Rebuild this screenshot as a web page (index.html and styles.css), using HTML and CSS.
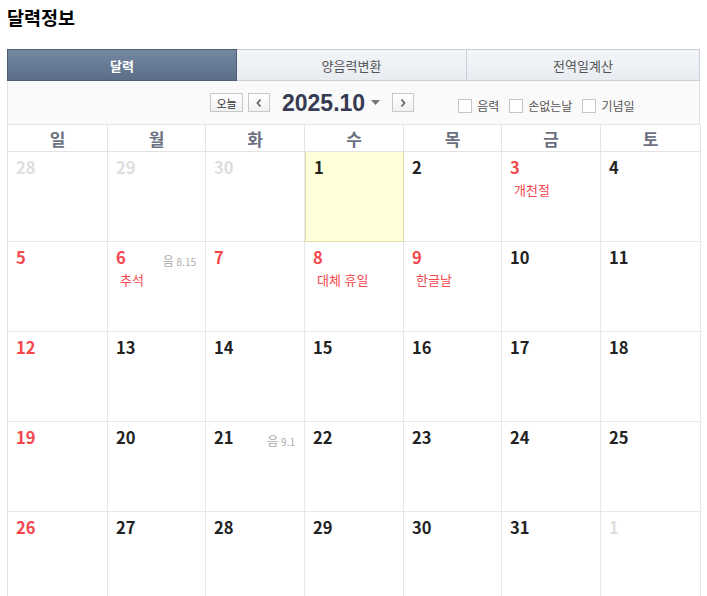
FILE: index.html
```html
<!DOCTYPE html>
<html lang="ko">
<head>
<meta charset="utf-8">
<link rel="stylesheet" href="styles.css">
</head>
<body>
<h2 class="title">달력정보</h2>
<div class="cal">
  <div class="tabs">
    <div class="tab active">달력</div>
    <div class="tab">양음력변환</div>
    <div class="tab">전역일계산</div>
  </div>
  <div class="toolbar">
    <div class="nav">
      <span class="btn today">오늘</span>
      <span class="btn arrow"><svg width="8" height="10" viewBox="0 0 8 10"><path d="M5.5 1.5 L2.5 5 L5.5 8.5" fill="none" stroke="#666" stroke-width="1.8"/></svg></span>
      <span class="month">2025.10</span>
      <svg class="caret" width="9" height="6" viewBox="0 0 9 6"><path d="M0 0 H9 L4.5 5 Z" fill="#777"/></svg>
      <span class="btn arrow"><svg width="8" height="10" viewBox="0 0 8 10"><path d="M2.5 1.5 L5.5 5 L2.5 8.5" fill="none" stroke="#666" stroke-width="1.8"/></svg></span>
    </div>
    <div class="checks">
      <label class="chk"><span class="box"></span>음력</label>
      <label class="chk"><span class="box"></span>손없는날</label>
      <label class="chk"><span class="box"></span>기념일</label>
    </div>
  </div>
  <div class="grid">
    <div class="dow">일</div><div class="dow">월</div><div class="dow">화</div><div class="dow">수</div><div class="dow">목</div><div class="dow">금</div><div class="dow">토</div>

    <div class="day other"><span class="num">28</span></div>
    <div class="day other"><span class="num">29</span></div>
    <div class="day other"><span class="num">30</span></div>
    <div class="day today-cell"><span class="num">1</span></div>
    <div class="day"><span class="num">2</span></div>
    <div class="day red"><span class="num">3</span><div class="hol">개천절</div></div>
    <div class="day"><span class="num">4</span></div>

    <div class="day red"><span class="num">5</span></div>
    <div class="day red"><span class="num">6</span><span class="lunar"><b>음</b> 8.15</span><div class="hol">추석</div></div>
    <div class="day red"><span class="num">7</span></div>
    <div class="day red"><span class="num">8</span><div class="hol">대체 휴일</div></div>
    <div class="day red"><span class="num">9</span><div class="hol">한글날</div></div>
    <div class="day"><span class="num">10</span></div>
    <div class="day"><span class="num">11</span></div>

    <div class="day red"><span class="num">12</span></div>
    <div class="day"><span class="num">13</span></div>
    <div class="day"><span class="num">14</span></div>
    <div class="day"><span class="num">15</span></div>
    <div class="day"><span class="num">16</span></div>
    <div class="day"><span class="num">17</span></div>
    <div class="day"><span class="num">18</span></div>

    <div class="day red"><span class="num">19</span></div>
    <div class="day"><span class="num">20</span></div>
    <div class="day"><span class="num">21</span><span class="lunar"><b>음</b> 9.1</span></div>
    <div class="day"><span class="num">22</span></div>
    <div class="day"><span class="num">23</span></div>
    <div class="day"><span class="num">24</span></div>
    <div class="day"><span class="num">25</span></div>

    <div class="day red"><span class="num">26</span></div>
    <div class="day"><span class="num">27</span></div>
    <div class="day"><span class="num">28</span></div>
    <div class="day"><span class="num">29</span></div>
    <div class="day"><span class="num">30</span></div>
    <div class="day"><span class="num">31</span></div>
    <div class="day other"><span class="num">1</span></div>
  </div>
</div>
</body>
</html>
```
FILE: styles.css
```css
* { box-sizing: border-box; }
html, body { margin: 0; padding: 0; background: #fff; }
body {
  padding: 0 7px;
  font-family: "Noto Sans CJK KR", "Noto Sans", sans-serif;
  color: #222;
  overflow: hidden;
}
.title {
  margin: 0;
  padding-top: 4px;
  height: 49px;
  font-size: 18.5px;
  line-height: 26px;
  font-weight: 700;
  color: #000;
}
.cal { width: 693px; }
.tabs { display: flex; height: 32px; }
.tab {
  flex: 1;
  display: flex;
  align-items: center;
  justify-content: center;
  font-size: 13px;
  color: #555;
  background: linear-gradient(#f3f5f8, #e8ecf1);
  border: 1px solid #c9cfd7;
  border-left: none;
}
.tab.active {
  flex: 0 0 230px;
  background: linear-gradient(#7488a2, #5c6e87);
  border: 1px solid #4e5d72;
  color: #fff;
  font-weight: 700;
}
.tab:nth-child(2) { flex: 0 0 230px; }
.toolbar {
  height: 43px;
  background: #fafafa;
  border-left: 1px solid #e3e3e3;
  border-right: 1px solid #e3e3e3;
  display: flex;
  align-items: center;
  padding-left: 202px;
}
.nav { display: flex; align-items: center; }
.btn {
  display: inline-flex;
  align-items: center;
  justify-content: center;
  height: 19px;
  border: 1px solid #c8c8c8;
  background: linear-gradient(#fff, #f1f1f1);
  font-size: 11px;
  color: #333;
}
.today { width: 33px; margin-right: 5px; }
.arrow { width: 22px; }
.month {
  font-family: "Liberation Sans", Arial, sans-serif;
  font-weight: 700;
  font-size: 23px;
  line-height: 26px;
  color: #363a52;
  margin-left: 12px;
}
.caret { margin: 0 12px 0 6px; }
.checks { display: flex; align-items: center; margin-left: 44px; margin-top: 6px; }
.chk {
  display: flex;
  align-items: center;
  font-size: 12px;
  color: #555;
  margin-right: 10px;
}
.chk .box {
  width: 14px;
  height: 14px;
  border: 1px solid #c6c6c6;
  background: #fff;
  margin-right: 5px;
}
.grid {
  display: grid;
  grid-template-columns: 100px 98px 99px 99px 98px 99px 100px;
  grid-auto-rows: 90px;
  grid-template-rows: 27px;
  border-left: 1px solid #e3e3e3;
  border-top: 1px solid #e3e3e3;
}
.dow {
  display: flex;
  align-items: center;
  justify-content: center;
  font-size: 17px;
  font-weight: 700;
  color: #6c7182;
  border-right: 1px solid #e3e3e3;
  border-bottom: 1px solid #e3e3e3;
}
.day {
  position: relative;
  border-right: 1px solid #e8e8e8;
  border-bottom: 1px solid #e8e8e8;
  padding: 4px 0 0 8px;
}
.num {
  display: block;
  font-size: 16.5px;
  font-weight: 700;
  line-height: 22px;
  color: #222;
}
.day.red .num { color: #f5474d; }
.day.other .num { color: #dedede; }
.today-cell { background: #ffffd8; border: 1px solid #dedcae; border-top: none; }
.hol {
  margin-top: 2px;
  padding-left: 4px;
  font-size: 13px;
  color: #f5474d;
}
.lunar {
  position: absolute;
  top: 10px;
  right: 9px;
  font-size: 10px;
  color: #aaa;
}
.lunar b { font-weight: 400; font-size: 12px; }
```
